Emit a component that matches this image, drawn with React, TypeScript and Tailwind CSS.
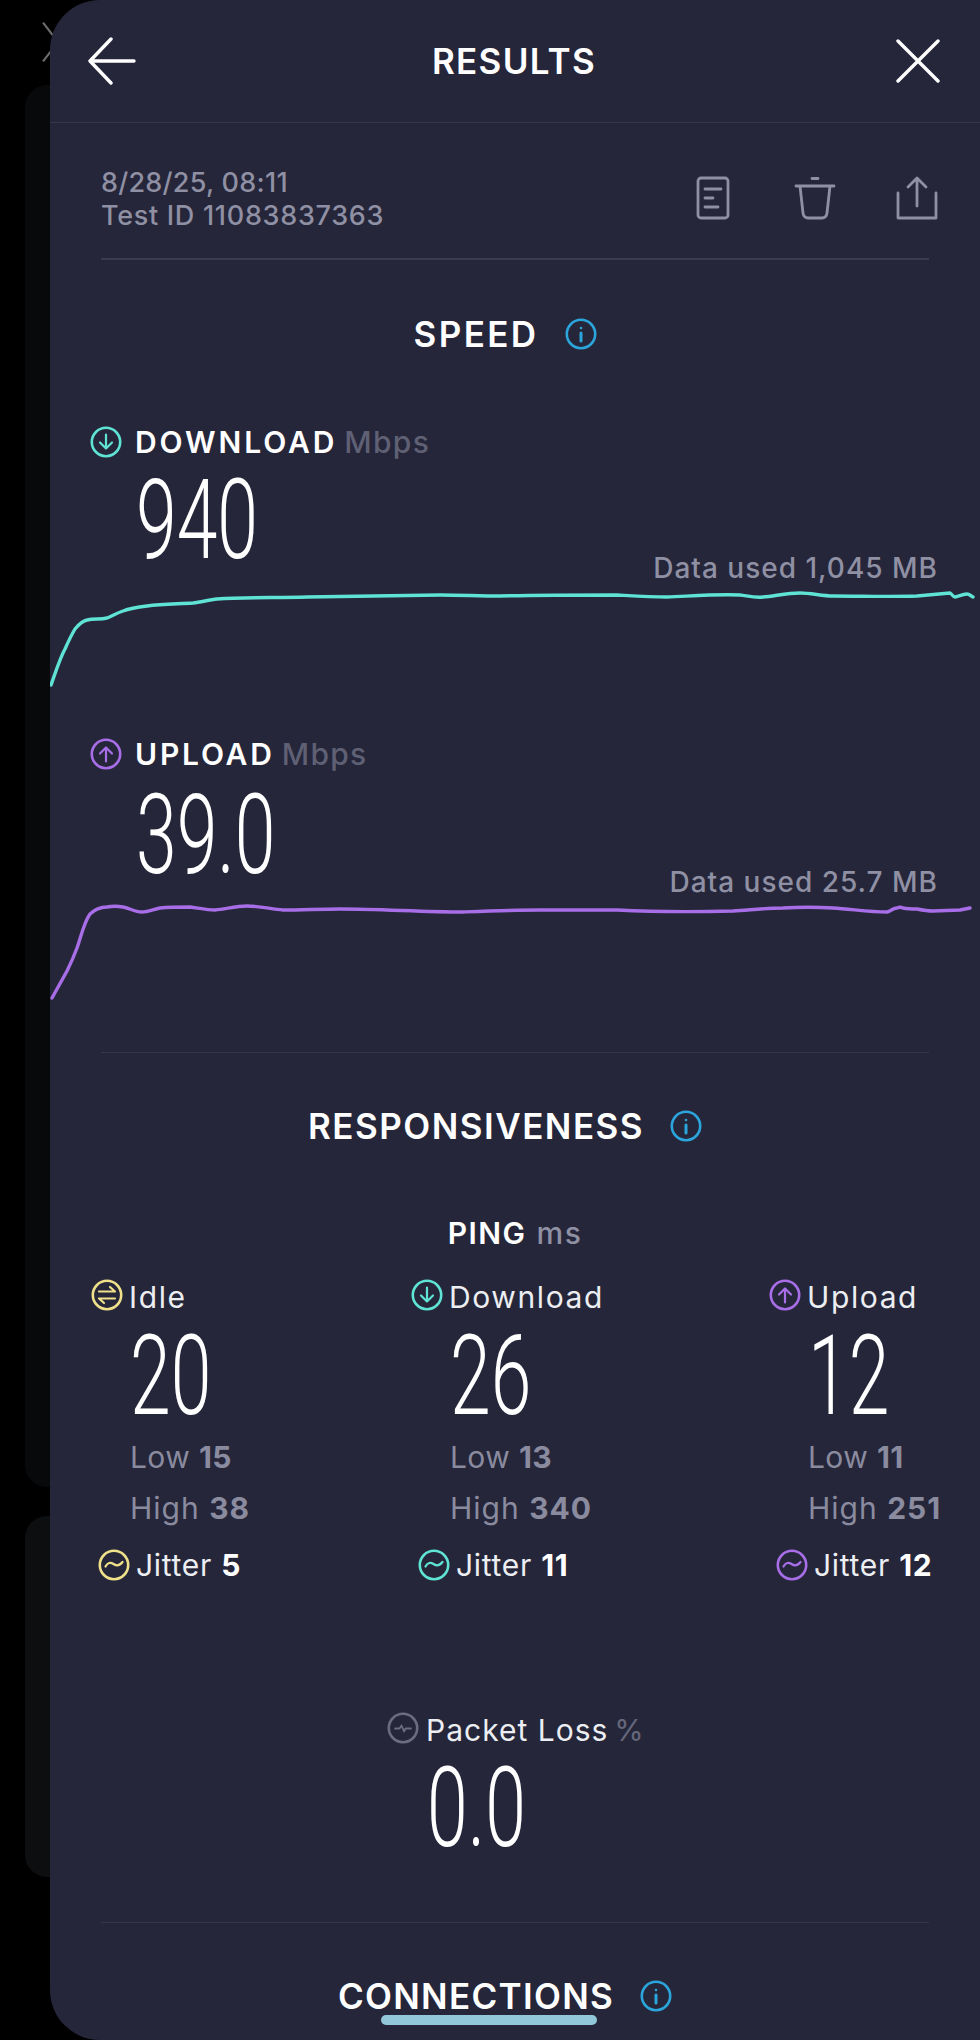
import type { ReactNode } from 'react'

const DOWN_LINE =
  'M51 683 C55 672 60 656 65 647 C69 638 72 632 75 627 C79 622 83 619 87 618 C94 616 100 618 107 616 C112 614 117 611 123 609 C131 606 139 605 147 604 C162 602 178 602 193 601 C201 600 209 598 217 597 C247 595 277 596 307 595 C351 594 396 594 440 593 C460 593 480 594 500 594 C540 593 580 593 617 593 C635 594 650 595 667 595 C692 594 716 592 740 593 C748 594 755 596 763 595 C775 594 787 591 800 591 C811 591 822 594 833 594 C861 594 889 595 917 594 C928 593 939 592 950 591 C952 592 953 595 955 595 C959 594 963 592 967 592 C969 592 971 594 973 595'

const UP_LINE =
  'M52 997 L67 970 C71 962 74 955 77 947 C81 936 84 921 90 913 C95 908 101 906 107 906 C112 905 118 905 123 906 C129 907 135 911 142 911 C148 911 154 908 160 907 C170 906 180 906 190 906 C198 907 207 909 215 909 C226 908 236 905 247 905 C259 905 271 908 283 909 C302 909 321 908 340 908 C381 908 422 911 463 911 C489 910 514 909 540 909 L617 909 C656 911 694 911 733 910 C750 909 766 907 783 907 C800 906 816 906 833 907 C851 908 869 911 887 911 C891 910 893 907 897 907 C899 906 901 906 903 907 C908 908 912 908 917 908 C922 909 928 910 933 910 L960 909 L970 907'

function CircleIcon({ className, children }: { className: string; children: ReactNode }) {
  return (
    <svg viewBox="0 0 32 32" className={`h-8 w-8 shrink-0 ${className}`} fill="none" stroke="currentColor" strokeWidth="2.6" strokeLinecap="round" strokeLinejoin="round">
      <circle cx="16" cy="16" r="14.2" />
      {children}
    </svg>
  )
}

const ArrowDown = () => <path d="M16 8.5v14M10 16.5l6 6 6-6" strokeWidth="2.2" />
const ArrowUp = () => <path d="M16 23.5v-14M10 15.5l6-6 6 6" strokeWidth="2.2" />
const Swap = () => <path d="M8 12.5h16M19 8l5 4.5M24 19.5H8M13 24l-5-4.5" strokeWidth="2.2" />
const Wave = () => <path d="M7.5 17.5c2-4 5-4.5 8-2.5s6 2 9-2" strokeWidth="2.2" />

function Info() {
  return (
    <CircleIcon className="text-[#2ba5dc]">
      <path d="M16 15v8" strokeWidth="3" />
      <circle cx="16" cy="10" r="1.3" fill="currentColor" stroke="none" />
    </CircleIcon>
  )
}

function BigNumber({ children }: { children: string }) {
  return (
    <div className="origin-left scale-x-[.66] font-['Roboto'] text-[111px] leading-[80px] font-[350] text-white">
      {children}
    </div>
  )
}

function SectionTitle({ title, tracking }: { title: string; tracking: string }) {
  return (
    <div className="flex items-center justify-center gap-[26px] pr-[20px]">
      <span className={`text-[35px] leading-10 font-semibold text-white ${tracking}`}>{title}</span>
      <Info />
    </div>
  )
}

function PingColumn({
  label,
  value,
  low,
  high,
  jitter,
  labelIcon,
  color,
}: {
  label: string
  value: string
  low: string
  high: string
  jitter: string
  labelIcon: ReactNode
  color: string
}) {
  return (
    <div>
      <div className="flex h-[34px] items-center gap-[6px]">
        <CircleIcon className={`-mt-1 ${color}`}>{labelIcon}</CircleIcon>
        <span className="text-[30px] leading-[34px] tracking-[1.6px] text-[#eceef2]">{label}</span>
      </div>
      <div className="mt-[22px] pl-[39px]">
        <BigNumber>{value}</BigNumber>
      </div>
      <div className="mt-[16px] pl-[39px] text-[30px] leading-[51px] text-[#8a8b9f]">
        <div className="tracking-[0.4px]">
          Low <b className="font-bold">{low}</b>
        </div>
        <div className="tracking-[1px]">
          High <b className="font-bold">{high}</b>
        </div>
      </div>
      <div className="mt-[14px] flex h-[34px] items-center gap-[6px] pl-[7px]">
        <CircleIcon className={color}>
          <Wave />
        </CircleIcon>
        <span className="text-[30px] leading-[34px] tracking-[0.7px] text-[#eceef2]">
          Jitter <b className="font-bold text-white">{jitter}</b>
        </span>
      </div>
    </div>
  )
}

export default function App() {
  return (
    <div className="relative flex h-[2040px] w-[980px] overflow-hidden bg-black font-[Inter,sans-serif]">
      {/* cards of the screen behind the sheet */}
      <div className="relative w-[50px] shrink-0 pt-[85px] pl-[25px]">
        <svg viewBox="0 0 40 50" className="absolute top-[20px] left-[40px] h-[44px] w-[36px]" fill="none" stroke="#6b6b6b" strokeWidth="2.5">
          <path d="M3 3l34 44M37 3L3 47" />
        </svg>
        <div className="h-[1402px] rounded-l-[22px] bg-[#08090b]" />
        <div className="mt-[29px] h-[361px] rounded-l-[22px] bg-[#0d0e10]" />
      </div>

      <div className="relative z-10 flex-1 rounded-l-[50px] bg-[#25263a]">
        <header className="grid h-[123px] grid-cols-[1fr_auto_1fr] items-center border-b border-[#353749] pr-[40px] pl-[38px]">
          <svg viewBox="0 0 48 48" className="h-[48px] w-[48px]" fill="none" stroke="white" strokeWidth="3.4" strokeLinecap="round" strokeLinejoin="round">
            <path d="M46 24H2M23 2L2 24l21 22" />
          </svg>
          <h1 className="text-[35px] leading-10 font-semibold tracking-[1.3px] text-white">RESULTS</h1>
          <svg viewBox="0 0 44 44" className="h-[44px] w-[44px] justify-self-end" fill="none" stroke="white" strokeWidth="3.4" strokeLinecap="round">
            <path d="M2 2l40 40M42 2L2 42" />
          </svg>
        </header>

        <section className="mx-[51px] flex h-[137px] items-start justify-between border-b-2 border-[#3a3c4e] pt-[43px]">
          <div className="text-[27px] leading-[33px] font-medium text-[#8f90a3]">
            <div className="tracking-[0.25px]">8/28/25, 08:11</div>
            <div className="tracking-[0.7px]">Test ID 11083837363</div>
          </div>
          <div className="-mr-[9px] mt-[10px] flex text-[#8f90a3]">
            <svg viewBox="0 0 34 44" className="mr-[64px] h-[44px] w-[34px]" fill="none" stroke="currentColor" strokeWidth="2.8" strokeLinecap="round" strokeLinejoin="round">
              <rect x="2" y="2" width="30" height="40" rx="3" />
              <path d="M9 13h16M9 22h8M9 31h13" />
            </svg>
            <svg viewBox="0 0 42 44" className="mr-[60px] h-[44px] w-[42px]" fill="none" stroke="currentColor" strokeWidth="2.8" strokeLinecap="round" strokeLinejoin="round">
              <path d="M2 10h38M18 2.500h6M6 10l3 27c.3 3 2.500 5 5 5h14c2.500 0 4.700-2 5-5l3-27" />
            </svg>
            <svg viewBox="0 0 42 44" className="h-[44px] w-[42px]" fill="none" stroke="currentColor" strokeWidth="2.8" strokeLinecap="round" strokeLinejoin="round">
              <path d="M2 17v25h38V17M21 30V3M12 11l9-9 9 9" />
            </svg>
          </div>
        </section>

        <div className="mt-[54px]">
          <SectionTitle title="SPEED" tracking="tracking-[2.4px]" />
        </div>

        <section className="mt-[72px]">
          <div className="flex h-[32px] items-center pl-[40px]">
            <CircleIcon className="text-[#5fe3d4]">
              <ArrowDown />
            </CircleIcon>
            <span className="ml-[13px] text-[30px] font-semibold tracking-[2.9px] text-white">DOWNLOAD</span>
            <span className="ml-[7px] text-[30px] font-medium tracking-[1.3px] text-[#5f6074]">Mbps</span>
          </div>
          <div className="mt-[10px] flex h-[116px] items-end justify-between pr-[42px] pl-[86px]">
            <div className="pb-[24px]">
              <BigNumber>940</BigNumber>
            </div>
            <span className="text-[28px] leading-[32px] font-medium tracking-[1px] text-[#8f90a3]">Data used 1,045 MB</span>
          </div>
          <svg viewBox="50 585 930 105" className="mt-[3px] h-[105px] w-[930px]" fill="none" stroke="#5fe3d4" strokeWidth="3.4" strokeLinecap="round" strokeLinejoin="round">
            <path d={DOWN_LINE} />
          </svg>
        </section>

        <section className="mt-[46px]">
          <div className="flex h-[32px] items-center pl-[40px]">
            <CircleIcon className="text-[#a86ee8]">
              <ArrowUp />
            </CircleIcon>
            <span className="ml-[13px] text-[30px] font-semibold tracking-[2.8px] text-white">UPLOAD</span>
            <span className="ml-[7px] text-[30px] font-medium tracking-[1.3px] text-[#5f6074]">Mbps</span>
          </div>
          <div className="mt-[10px] flex h-[118px] items-end justify-between pr-[42px] pl-[86px]">
            <div className="pb-[23px]">
              <BigNumber>39.0</BigNumber>
            </div>
            <span className="text-[28px] leading-[32px] font-medium tracking-[1px] text-[#8f90a3]">Data used 25.7 MB</span>
          </div>
          <svg viewBox="50 901 930 105" className="mt-[4px] h-[105px] w-[930px]" fill="none" stroke="#a86ee8" strokeWidth="3.4" strokeLinecap="round" strokeLinejoin="round">
            <path d={UP_LINE} />
          </svg>
        </section>

        <div className="mx-[51px] mt-[45px] border-t border-[#353749]" />

        <div className="mt-[53px]">
          <SectionTitle title="RESPONSIVENESS" tracking="tracking-[1.5px]" />
        </div>

        <div className="mt-[67px] text-center text-[30px] leading-10 tracking-[1.5px]">
          <span className="font-semibold text-white">PING</span> <span className="font-medium text-[#8f90a3]">ms</span>
        </div>

        <section className="mt-[27px] grid grid-cols-[320px_358px_1fr] pl-[41px]">
          <PingColumn label="Idle" value="20" low="15" high="38" jitter="5" color="text-[#efe08a]" labelIcon={<Swap />} />
          <PingColumn label="Download" value="26" low="13" high="340" jitter="11" color="text-[#5fe3d4]" labelIcon={<ArrowDown />} />
          <PingColumn label="Upload" value="12" low="11" high="251" jitter="12" color="text-[#a86ee8]" labelIcon={<ArrowUp />} />
        </section>

        <section className="mt-[131px] pl-[337px]">
          <div className="flex h-[34px] items-center">
            <CircleIcon className="-mt-1 text-[#6b6c7e]">
              <path d="M8 16.500h4.500l2-3 2.500 6 1.500-3H24" strokeWidth="1.800" />
            </CircleIcon>
            <span className="ml-[7px] text-[30px] leading-[34px] tracking-[1px] text-[#eceef2]">Packet Loss</span>
            <span className="ml-[6px] text-[30px] leading-[34px] text-[#66677b]">%</span>
          </div>
          <div className="mt-[21px] pl-[40px]">
            <BigNumber>0.0</BigNumber>
          </div>
        </section>

        <div className="mx-[51px] mt-[74px] border-t border-[#353749]" />

        <div className="mt-[53px]">
          <SectionTitle title="CONNECTIONS" tracking="tracking-[1.3px]" />
        </div>
      </div>

      {/* system gesture bar */}
      <div className="absolute top-[2015px] left-[381px] z-20 h-[10px] w-[216px] rounded-full bg-[#92c7d9]" />
    </div>
  )
}
